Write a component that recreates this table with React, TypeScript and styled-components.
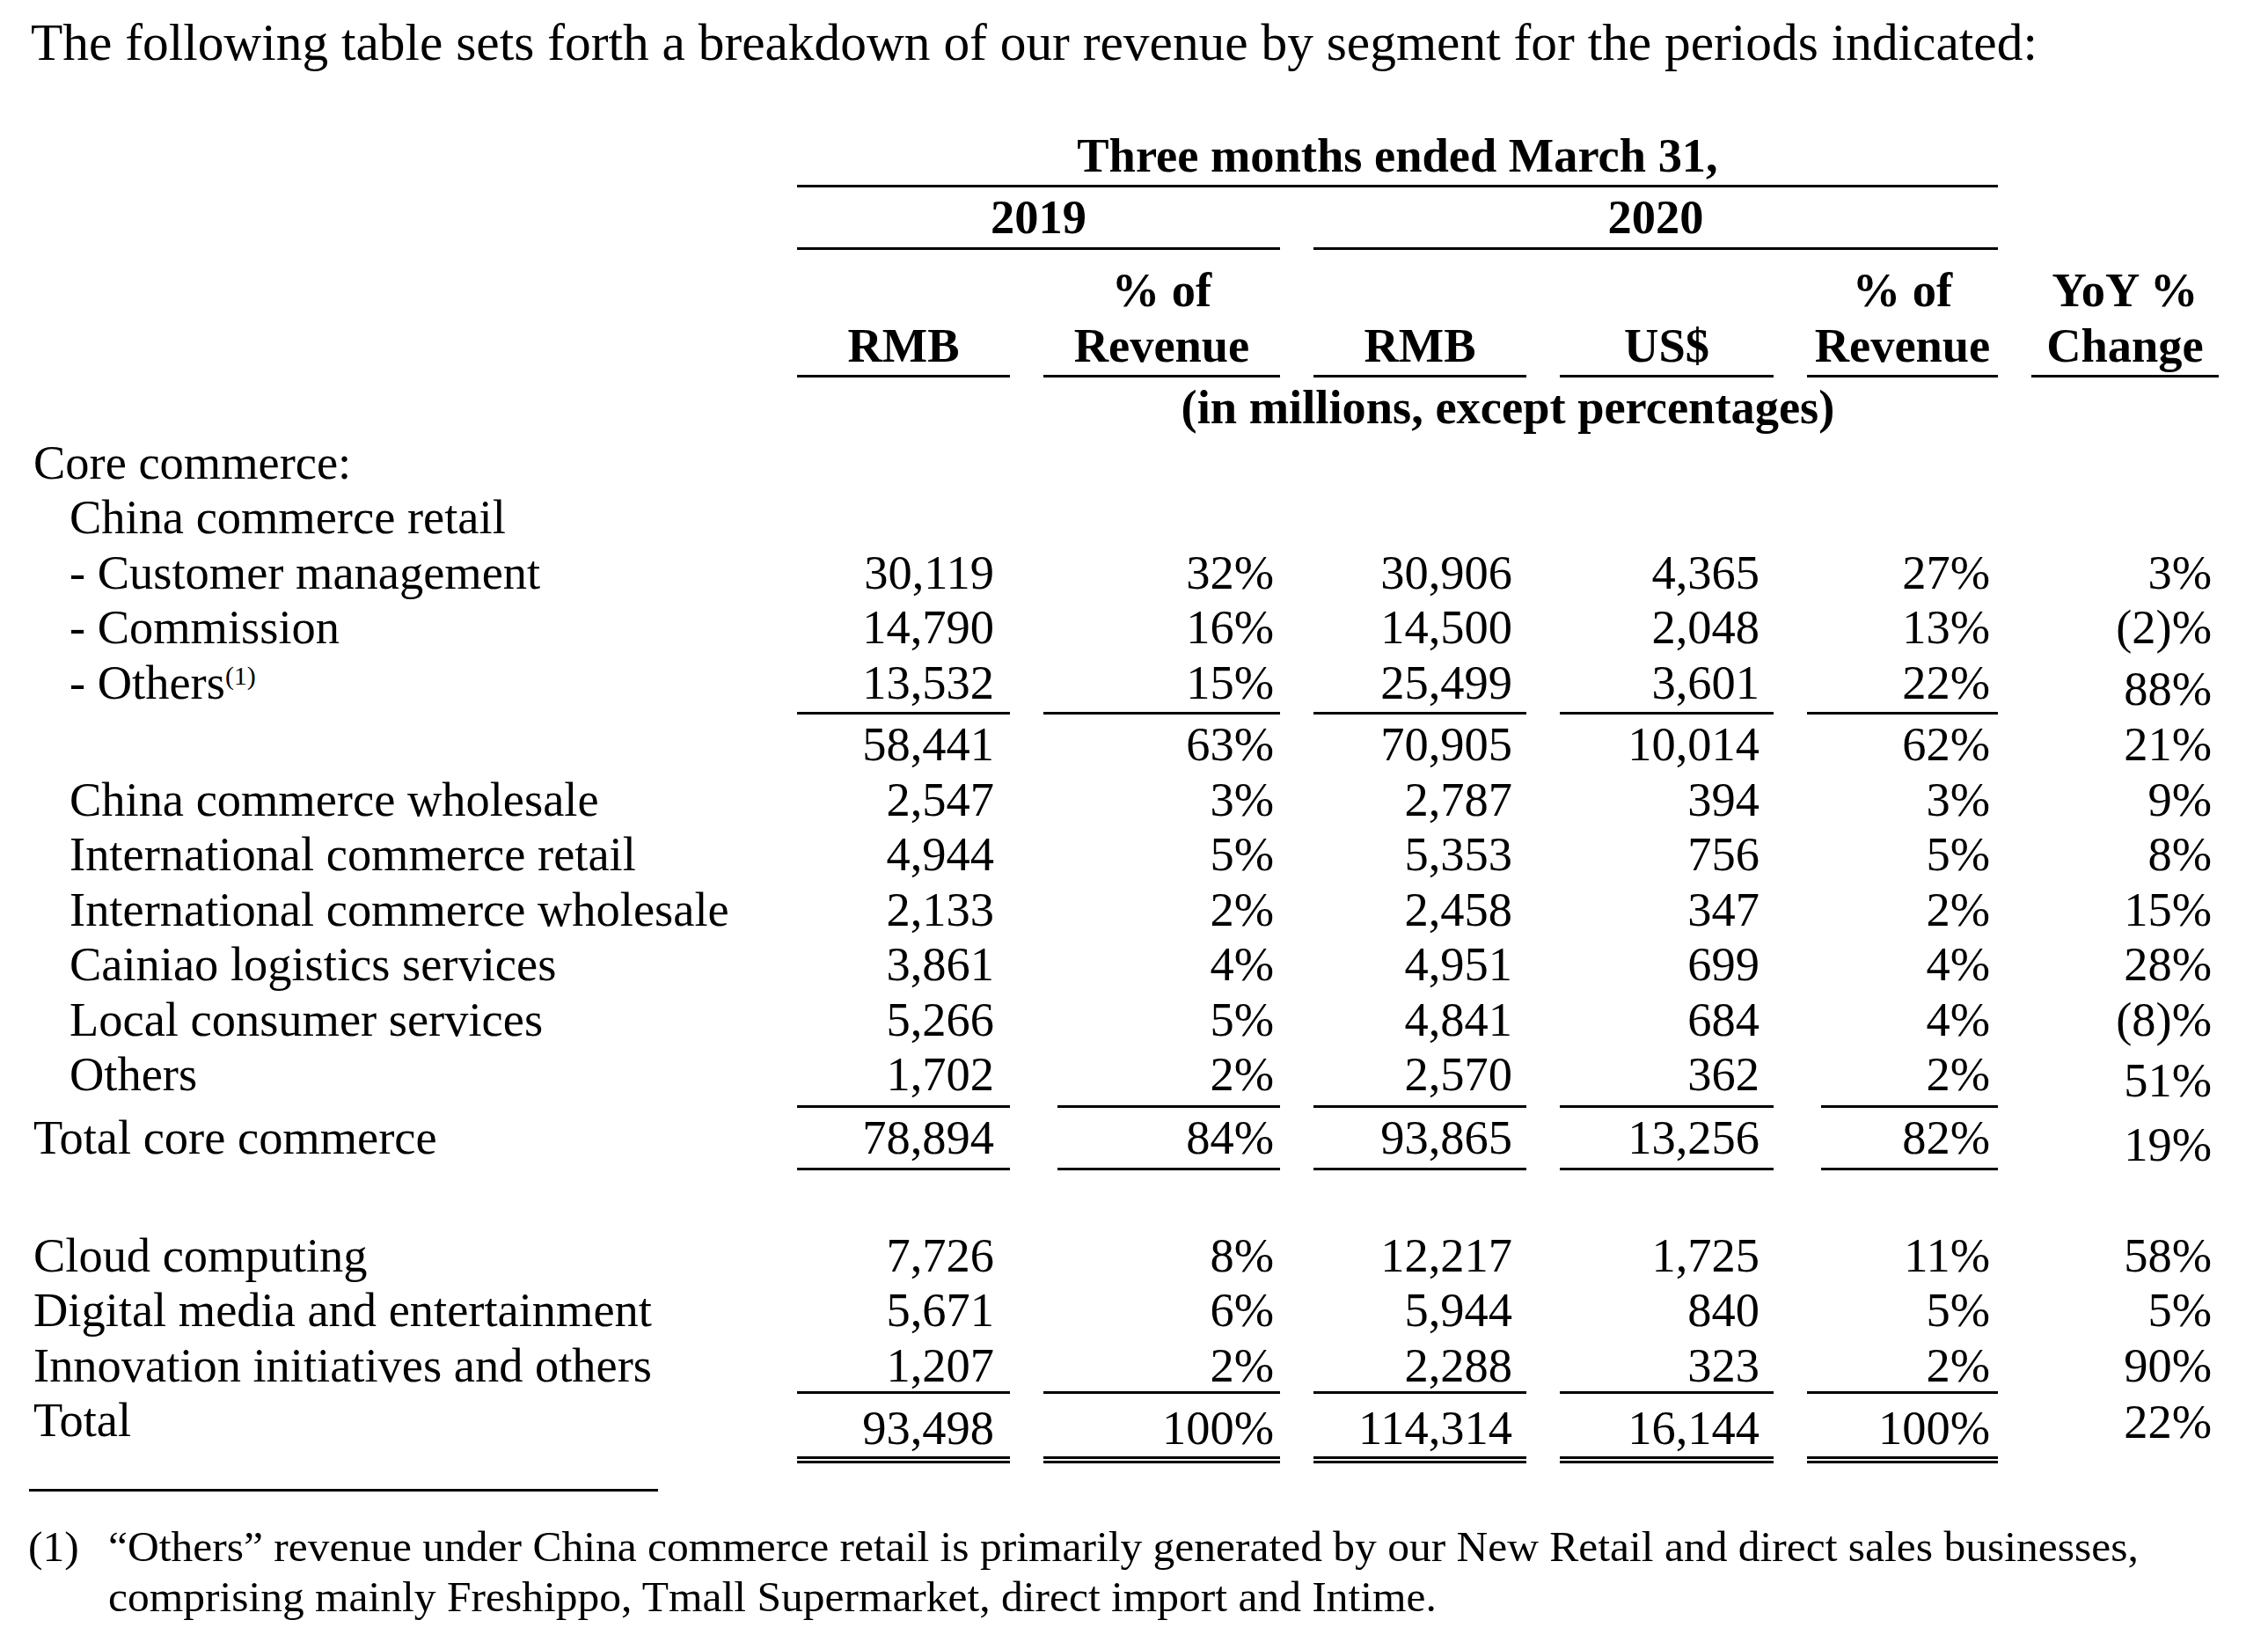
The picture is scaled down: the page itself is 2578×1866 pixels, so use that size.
import React from "react";
import styled, { createGlobalStyle } from "styled-components";

const GlobalStyle = createGlobalStyle`
  html, body {
    margin: 0;
    padding: 0;
    background: #ffffff;
  }
  body {
    font-family: "Liberation Serif", "Times New Roman", serif;
    color: #000000;
  }
`;

const COLS = "833px 242px 269px 242px 243px 217px 213px";
const PAD_RIGHT = [18, 7, 16, 16, 9, 8];
/* each text line takes 62.5px: 6px above a 56.5px line box */
const TEXT_TOP = 6;

const pos = (n?: number) => (n && n > 0 ? n : 0);
const neg = (n?: number) => (n && n < 0 ? n : 0);

const Page = styled.div`
  padding: 14px 0 40px 35px;
`;

const Intro = styled.p`
  margin: 0;
  font-size: 59.4px;
  line-height: 68px;
  white-space: nowrap;
`;

const Table = styled.div`
  margin-top: 61px;
  font-size: 54.45px;
  line-height: 56.5px;
`;

const Row = styled.div<{ $top?: number }>`
  display: grid;
  grid-template-columns: ${COLS};
  column-gap: 38px;
  margin-top: ${(p) => p.$top ?? 0}px;
`;

const Spacer = styled.div`
  height: 62.5px;
`;

const HeadCell = styled.div<{ $span: string; $rule?: boolean; $pad?: number }>`
  grid-column: ${(p) => p.$span};
  font-weight: 700;
  text-align: center;
  white-space: nowrap;
  display: flex;
  flex-direction: column;
  justify-content: flex-end;
  gap: 6px;
  padding-top: ${TEXT_TOP}px;
  padding-bottom: ${(p) => (p.$rule ? p.$pad ?? 5 : 0)}px;
  border-bottom: ${(p) => (p.$rule ? "3px solid #000" : "none")};
`;

const Label = styled.div<{ $indent?: boolean; $dy?: number }>`
  grid-column: 1;
  white-space: nowrap;
  padding-left: ${(p) => (p.$indent ? 44 : 3)}px;
  margin-top: ${(p) => neg(p.$dy)}px;
  padding-top: ${(p) => TEXT_TOP + pos(p.$dy)}px;
`;

type RuleKind = "single" | "double";

const Num = styled.div<{
  $col: number;
  $rule?: RuleKind;
  $pad?: number;
  $inset?: boolean;
  $dy?: number;
}>`
  text-align: right;
  white-space: nowrap;
  padding-right: ${(p) => PAD_RIGHT[p.$col]}px;
  margin-left: ${(p) => (p.$inset ? 16 : 0)}px;
  margin-top: ${(p) => neg(p.$dy)}px;
  padding-top: ${(p) => TEXT_TOP + pos(p.$dy)}px;
  padding-bottom: ${(p) => (p.$rule ? p.$pad ?? 5 : 0)}px;
  border-bottom: ${(p) =>
    p.$rule === "double"
      ? "8px double #000"
      : p.$rule === "single"
      ? "3px solid #000"
      : "none"};
`;

const Sup = styled.sup`
  font-size: 30px;
  line-height: 0;
  vertical-align: 16px;
`;

const FootRule = styled.div`
  margin: 29px 0 0 -2px;
  width: 715px;
  height: 0;
  border-top: 3px solid #000;
`;

const Footnote = styled.div`
  margin: 34px 0 0 -3px;
  width: 2460px;
  display: grid;
  grid-template-columns: 91px 1fr;
  font-size: 49.5px;
  line-height: 57px;
`;

const FootMark = styled.div``;
const FootText = styled.div``;

interface DataRow {
  label: React.ReactNode;
  indent?: boolean;
  values?: string[];
  rule?: RuleKind;
  pad?: number;
  inset?: boolean;
  yoyDy?: number;
  labelDy?: number;
  numDy?: number;
  spacerBefore?: boolean;
}

const rows: DataRow[] = [
  { label: "Core commerce:" },
  { label: "China commerce retail", indent: true },
  {
    label: "- Customer management",
    indent: true,
    values: ["30,119", "32%", "30,906", "4,365", "27%", "3%"],
  },
  {
    label: "- Commission",
    indent: true,
    values: ["14,790", "16%", "14,500", "2,048", "13%", "(2)%"],
  },
  {
    label: (
      <>
        - Others<Sup>(1)</Sup>
      </>
    ),
    indent: true,
    values: ["13,532", "15%", "25,499", "3,601", "22%", "88%"],
    rule: "single",
    pad: 5,
    yoyDy: 7,
  },
  {
    label: "",
    values: ["58,441", "63%", "70,905", "10,014", "62%", "21%"],
  },
  {
    label: "China commerce wholesale",
    indent: true,
    values: ["2,547", "3%", "2,787", "394", "3%", "9%"],
  },
  {
    label: "International commerce retail",
    indent: true,
    values: ["4,944", "5%", "5,353", "756", "5%", "8%"],
  },
  {
    label: "International commerce wholesale",
    indent: true,
    values: ["2,133", "2%", "2,458", "347", "2%", "15%"],
  },
  {
    label: "Cainiao logistics services",
    indent: true,
    values: ["3,861", "4%", "4,951", "699", "4%", "28%"],
  },
  {
    label: "Local consumer services",
    indent: true,
    values: ["5,266", "5%", "4,841", "684", "4%", "(8)%"],
  },
  {
    label: "Others",
    indent: true,
    values: ["1,702", "2%", "2,570", "362", "2%", "51%"],
    rule: "single",
    pad: 6,
    inset: true,
    yoyDy: 7,
  },
  {
    label: "Total core commerce",
    values: ["78,894", "84%", "93,865", "13,256", "82%", "19%"],
    rule: "single",
    pad: 6,
    inset: true,
    yoyDy: 8,
  },
  {
    label: "Cloud computing",
    values: ["7,726", "8%", "12,217", "1,725", "11%", "58%"],
    spacerBefore: true,
  },
  {
    label: "Digital media and entertainment",
    values: ["5,671", "6%", "5,944", "840", "5%", "5%"],
  },
  {
    label: "Innovation initiatives and others",
    values: ["1,207", "2%", "2,288", "323", "2%", "90%"],
    rule: "single",
    pad: 1,
  },
  {
    label: "Total",
    values: ["93,498", "100%", "114,314", "16,144", "100%", "22%"],
    rule: "double",
    pad: 4,
    labelDy: -4.5,
    numDy: 4.5,
    yoyDy: -2.5,
  },
];

const INSET_COLS = [1, 4];

function BodyRow({ row }: { row: DataRow }) {
  return (
    <Row>
      <Label $indent={row.indent} $dy={row.labelDy}>
        {row.label}
      </Label>
      {row.values &&
        row.values.map((v, i) => {
          const isYoy = i === 5;
          return (
            <Num
              key={i}
              $col={i}
              $rule={isYoy ? undefined : row.rule}
              $pad={row.pad}
              $inset={row.inset && INSET_COLS.includes(i)}
              $dy={isYoy ? row.yoyDy : row.numDy}
            >
              {v}
            </Num>
          );
        })}
    </Row>
  );
}

export default function App() {
  return (
    <>
      <GlobalStyle />
      <Page>
        <Intro>
          The following table sets forth a breakdown of our revenue by segment for the periods indicated:
        </Intro>
        <Table>
          <Row>
            <HeadCell $span="2 / 7" $rule $pad={4}>
              Three months ended March 31,
            </HeadCell>
          </Row>
          <Row>
            <HeadCell $span="2 / 4" $rule $pad={6}>
              2019
            </HeadCell>
            <HeadCell $span="4 / 7" $rule $pad={6}>
              2020
            </HeadCell>
          </Row>
          <Row $top={12}>
            <HeadCell $span="2" $rule>
              <span>RMB</span>
            </HeadCell>
            <HeadCell $span="3" $rule>
              <span>% of</span>
              <span>Revenue</span>
            </HeadCell>
            <HeadCell $span="4" $rule>
              <span>RMB</span>
            </HeadCell>
            <HeadCell $span="5" $rule>
              <span>US$</span>
            </HeadCell>
            <HeadCell $span="6" $rule>
              <span>% of</span>
              <span>Revenue</span>
            </HeadCell>
            <HeadCell $span="7" $rule>
              <span>YoY %</span>
              <span>Change</span>
            </HeadCell>
          </Row>
          <Row>
            <HeadCell $span="2 / -1">(in millions, except percentages)</HeadCell>
          </Row>
          {rows.map((r, i) => (
            <React.Fragment key={i}>
              {r.spacerBefore && <Spacer />}
              <BodyRow row={r} />
            </React.Fragment>
          ))}
        </Table>
        <FootRule />
        <Footnote>
          <FootMark>(1)</FootMark>
          <FootText>
            “Others” revenue under China commerce retail is primarily generated by our New Retail and direct sales
            businesses, comprising mainly Freshippo, Tmall Supermarket, direct import and Intime.
          </FootText>
        </Footnote>
      </Page>
    </>
  );
}
